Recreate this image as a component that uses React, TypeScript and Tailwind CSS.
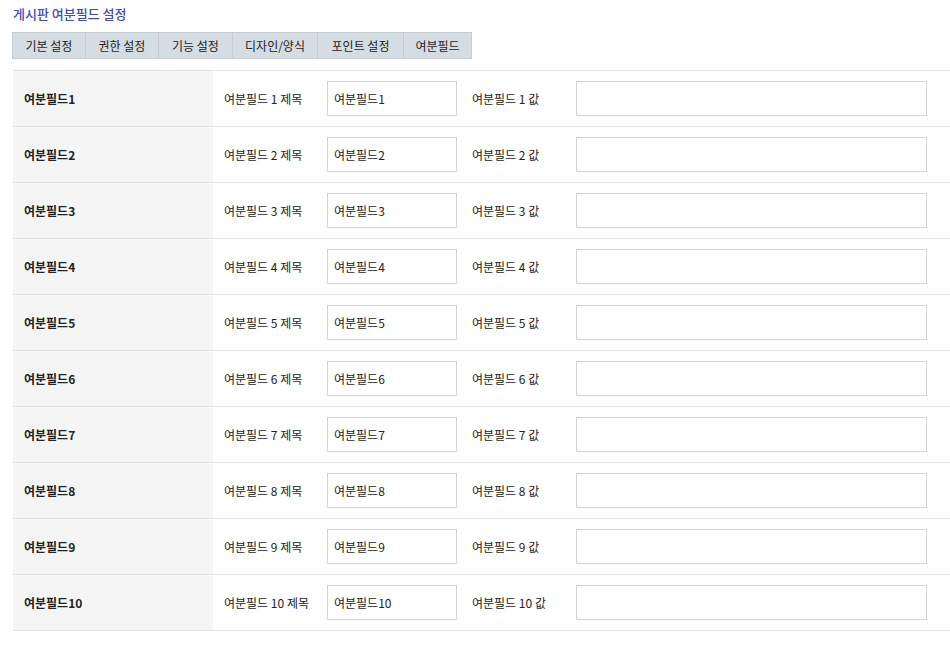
import React from "react";

const tabs: [string, string][] = [
  ["기본 설정", "w-[72px]"],
  ["권한 설정", "w-[73px]"],
  ["기능 설정", "w-[74px]"],
  ["디자인/양식", "w-[85px]"],
  ["포인트 설정", "w-[86px]"],
  ["여분필드", "w-[68px]"],
];
const rows = Array.from({ length: 10 }, (_, i) => i + 1);

export default function App() {
  return (
    <div
      className="min-h-[650px] w-[950px] overflow-hidden bg-white text-[12px] text-[#222]"
      style={{ fontFamily: '"Noto Sans CJK KR", "Liberation Sans", sans-serif' }}
    >
      <div className="pl-[13px] pt-[3px]">
        <h1 className="h-[22px] text-[13px] font-medium leading-[22px] text-[#3d4cb5]">게시판 여분필드 설정</h1>
      </div>

      <div className="ml-[12px] mt-[7px] flex w-max border border-[#c4ccd1] bg-[#d6dde2]">
        {tabs.map(([t, w], i) => (
          <div
            key={t}
            className={`flex h-[25px] items-center justify-center leading-none ${w} ${i > 0 ? "border-l border-[#c4ccd1]" : ""}`}
          >
            {t}
          </div>
        ))}
      </div>

      <div className="ml-[13px] mt-[11px] w-[960px] border-t border-[#e2e2e2]">
        {rows.map((n) => (
          <div key={n} className="flex h-[56px] border-b border-[#e2e2e2]">
            <div className="flex w-[200px] items-center bg-[#f5f5f5] pl-[11px] font-bold">여분필드{n}</div>
            <div className="flex flex-1 items-center pl-[11px]">
              <span className="w-[103px] whitespace-nowrap">여분필드 {n} 제목</span>
              <input
                defaultValue={`여분필드${n}`}
                className="h-[35px] w-[130px] border border-[#d3d3d3] px-[6px] text-[12px] text-[#222] outline-none"
              />
              <span className="ml-[15px] w-[104px] whitespace-nowrap">여분필드 {n} 값</span>
              <input className="h-[35px] w-[351px] border border-[#d3d3d3] px-[6px] text-[12px] outline-none" />
            </div>
          </div>
        ))}
      </div>
    </div>
  );
}
